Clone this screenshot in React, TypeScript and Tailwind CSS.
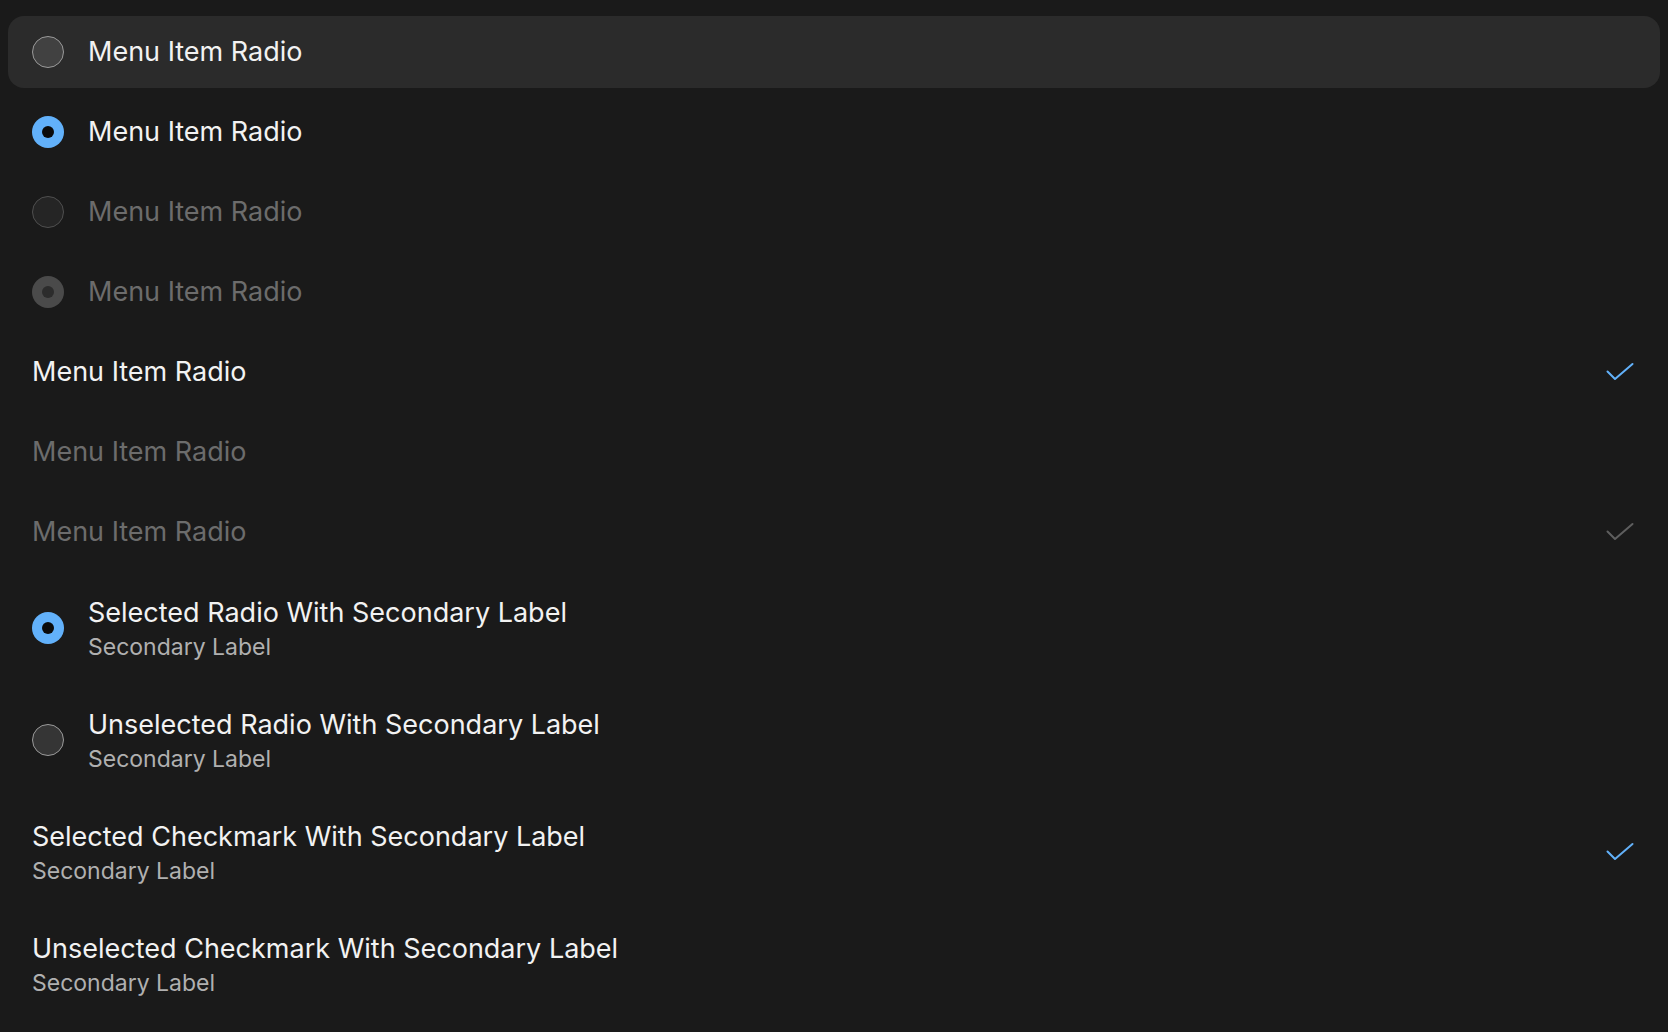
import React from "react";

type RadioState = "off" | "on" | "off-disabled" | "on-disabled" | "off-hover";

function Radio({ state }: { state: RadioState }) {
  if (state === "on") {
    return (
      <span className="flex h-8 w-8 shrink-0 items-center justify-center rounded-full bg-[#62b1fa]">
        <span className="h-3 w-3 rounded-full bg-[#0b0b0b]" />
      </span>
    );
  }
  if (state === "on-disabled") {
    return (
      <span className="flex h-8 w-8 shrink-0 items-center justify-center rounded-full bg-[#4a4a4a]">
        <span className="h-3 w-3 rounded-full bg-[#2c2c2c]" />
      </span>
    );
  }
  if (state === "off-disabled") {
    return <span className="h-8 w-8 shrink-0 rounded-full border-[1.5px] border-[#4f4f4f] bg-[#252525]" />;
  }
  if (state === "off-hover") {
    return <span className="h-8 w-8 shrink-0 rounded-full border-[1.5px] border-[#9a9a9a] bg-[#414141]" />;
  }
  return <span className="h-8 w-8 shrink-0 rounded-full border-[1.5px] border-[#9a9a9a] bg-[#353535]" />;
}

function Check({ disabled }: { disabled?: boolean }) {
  return (
    <svg
      width="32"
      height="32"
      viewBox="0 0 32 32"
      fill="none"
      className={"ml-auto shrink-0 " + (disabled ? "text-[#5e5e5e]" : "text-[#62b1fa]")}
    >
      <path d="M3.5 15.5 L11 23 L28.5 8" stroke="currentColor" strokeWidth="2" strokeLinecap="round" strokeLinejoin="round" />
    </svg>
  );
}

type Item = {
  label: string;
  secondary?: string;
  radio?: RadioState;
  check?: "on" | "disabled";
  disabled?: boolean;
  hover?: boolean;
};

const items: Item[] = [
  { label: "Menu Item Radio", radio: "off-hover", hover: true },
  { label: "Menu Item Radio", radio: "on" },
  { label: "Menu Item Radio", radio: "off-disabled", disabled: true },
  { label: "Menu Item Radio", radio: "on-disabled", disabled: true },
  { label: "Menu Item Radio", check: "on" },
  { label: "Menu Item Radio", disabled: true },
  { label: "Menu Item Radio", check: "disabled", disabled: true },
  { label: "Selected Radio With Secondary Label", secondary: "Secondary Label", radio: "on" },
  { label: "Unselected Radio With Secondary Label", secondary: "Secondary Label", radio: "off" },
  { label: "Selected Checkmark With Secondary Label", secondary: "Secondary Label", check: "on" },
  { label: "Unselected Checkmark With Secondary Label", secondary: "Secondary Label" },
];

export default function App() {
  return (
    <div className="flex min-h-screen flex-col gap-2 bg-[#1a1a1a] px-2 py-4 font-['Inter',sans-serif]">
      {items.map((item, i) => (
        <div
          key={i}
          className={
            "flex items-center gap-6 rounded-2xl px-6 " +
            (item.secondary ? "h-[104px] " : "h-[72px] ") +
            (item.hover ? "bg-[#2b2b2b]" : "")
          }
        >
          {item.radio && <Radio state={item.radio} />}
          <div className="flex flex-col">
            <span
              className={
                "text-[27px] " +
                (item.secondary ? "leading-[38px] " : "leading-8 ") +
                (item.disabled ? "text-[#6c6c6c]" : "text-[#f2f2f2]")
              }
            >
              {item.label}
            </span>
            {item.secondary && (
              <span className="text-[23px] leading-[31px] text-[#b0b0b0]">{item.secondary}</span>
            )}
          </div>
          {item.check && <Check disabled={item.check === "disabled"} />}
        </div>
      ))}
    </div>
  );
}
